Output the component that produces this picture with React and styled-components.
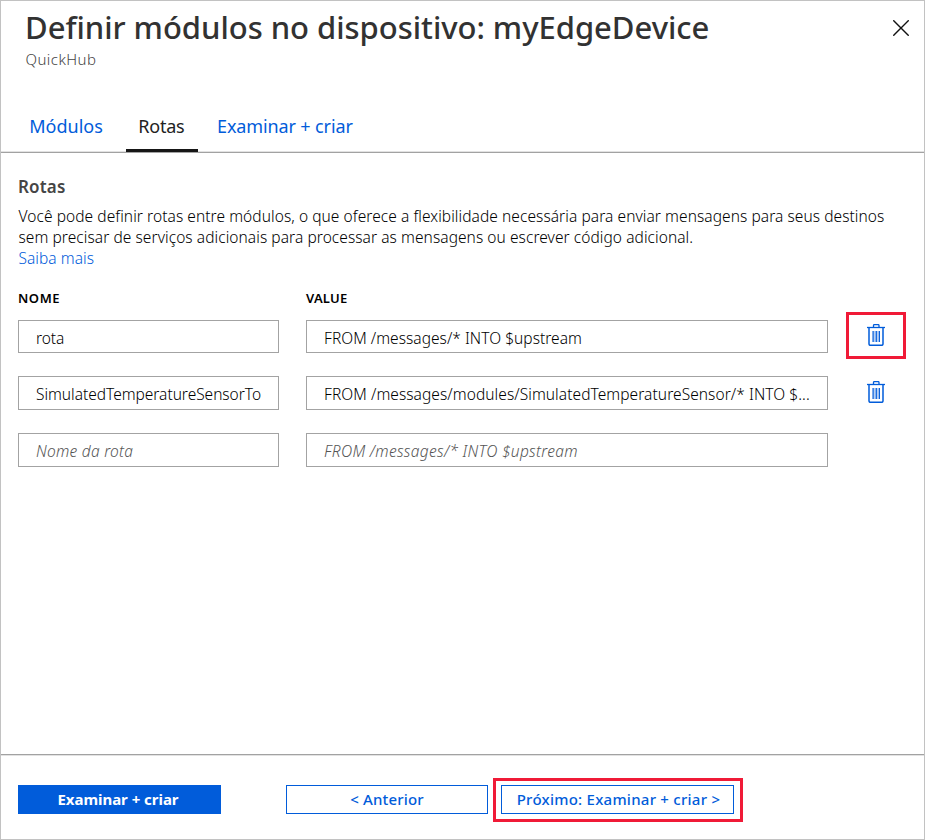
import React from "react";
import styled, { createGlobalStyle } from "styled-components";

const BLUE = "#015cda";
const RED = "#f01a37";

const GlobalStyle = createGlobalStyle`
  * { box-sizing: border-box; }
  body { margin: 0; background: #fff; }
  button, input { font: inherit; color: inherit; border-radius: 0; }
`;

const Panel = styled.main`
  width: 925px;
  height: 840px;
  display: flex;
  flex-direction: column;
  border: 1px solid #c2c2c2;
  background: #fff;
  color: #323130;
  font-family: "Noto Sans", "Open Sans", sans-serif;
`;

const Header = styled.header`
  display: flex;
  justify-content: space-between;
  height: 112px;
  padding: 5px 15px 0 24px;
`;

const Title = styled.h1`
  margin: 0;
  font-size: 31px;
  font-weight: 500;
  line-height: 42px;
  letter-spacing: -0.035px;
  color: #323232;
  white-space: nowrap;
`;

const Subtitle = styled.div`
  margin: 1px 0 0 0.5px;
  font-size: 15px;
  font-weight: 300;
  line-height: 20px;
  letter-spacing: 0.45px;
  color: #444;
`;

const CloseButton = styled.button`
  width: 16px;
  height: 16px;
  margin-top: 14px;
  padding: 0;
  border: 0;
  background: none;
  line-height: 0;
`;

const Tabs = styled.nav`
  display: flex;
  gap: 8px;
  height: 40px;
  padding-left: 16px;
  border-bottom: 1px solid #a2a2a2;
  box-shadow: inset 0 -1px #e2e2e2;
`;

const Tab = styled.a`
  width: ${(p) => p.$width}px;
  height: 39px;
  padding-left: ${(p) => p.$indent}px;
  font-size: 18px;
  line-height: 26px;
  font-weight: 400;
  letter-spacing: ${(p) => p.$tracking}px;
  white-space: nowrap;
  color: ${(p) => (p.$active ? "#222" : BLUE)};
  border-bottom: ${(p) => (p.$active ? "3px solid #161616" : "0")};
`;

const Content = styled.section`
  flex: 1;
  padding: 23px 18px 0 17px;
`;

const SectionTitle = styled.h2`
  margin: 0 0 8px;
  font-size: 17px;
  font-weight: 600;
  line-height: 22px;
  letter-spacing: 0.18px;
  color: #454545;
`;

const Description = styled.p`
  margin: 0;
  padding-left: 0.5px;
  font-size: 15.5px;
  font-weight: 300;
  line-height: 21px;
  letter-spacing: 0.069px;
  white-space: nowrap;
  color: #000;
`;

const LearnMore = styled.a`
  display: block;
  width: max-content;
  padding-left: 0.5px;
  font-size: 15.5px;
  font-weight: 300;
  line-height: 21px;
  letter-spacing: 0.05px;
  color: ${BLUE};
`;

const HeadRow = styled.div`
  display: grid;
  grid-template-columns: 261px 522px;
  column-gap: 27px;
  margin-top: 20px;
`;

const ColumnHead = styled.div`
  font-size: 13px;
  font-weight: 600;
  line-height: 18px;
  letter-spacing: ${(p) => p.$tracking}px;
  color: #000;
`;

const RouteTable = styled.div`
  display: flex;
  flex-direction: column;
  gap: 23px;
  margin-top: 13px;
`;

const RouteRow = styled.div`
  display: grid;
  grid-template-columns: 261px 522px 60px;
  grid-template-rows: ${(p) => p.$height}px;
  column-gap: 27px;
`;

const Field = styled.input`
  width: 100%;
  height: 100%;
  padding: ${(p) => p.$drop}px 12px 0 17px;
  border: 1px solid #a3a3a3;
  outline: 0;
  background: #fff;
  font-size: 15.5px;
  font-weight: 300;
  letter-spacing: ${(p) => p.$tracking}px;
  text-overflow: ellipsis;
  color: #000;
  &::placeholder {
    color: #555;
    font-style: italic;
    opacity: 1;
  }
`;

const DeleteButton = styled.button`
  display: flex;
  justify-content: center;
  align-items: center;
  width: 60px;
  height: 47px;
  margin: ${(p) => (p.$highlight ? -8 : -7)}px 0 0 -9px;
  padding: 0 0 1px;
  border: 3px solid ${(p) => (p.$highlight ? RED : "transparent")};
  background: none;
`;

const Footer = styled.footer`
  display: flex;
  align-items: center;
  height: 85px;
  padding: 4px 0 0 17px;
  border-top: 1px solid #a2a2a2;
  box-shadow: inset 0 1px #e2e2e2;
`;

const ActionButton = styled.button`
  width: ${(p) => p.$width}px;
  height: 29px;
  padding: 0 ${(p) => p.$padRight || 0}px 0 ${(p) => p.$padLeft || 0}px;
  border: 1px solid ${BLUE};
  background: ${(p) => (p.$primary ? BLUE : "#fff")};
  color: ${(p) => (p.$primary ? "#fff" : BLUE)};
  font-size: 15px;
  font-weight: ${(p) => (p.$primary ? 700 : 500)};
  line-height: 27px;
  letter-spacing: ${(p) => p.$tracking}px;
  white-space: nowrap;
`;

const PreviousSlot = styled.div`
  display: flex;
  margin-left: 65px;
`;

const NextHighlight = styled.div`
  display: flex;
  width: 250px;
  height: 44px;
  margin: 2px 0 0 5px;
  padding: 4px 0 0 5px;
  border: 3px solid ${RED};
`;

const CloseIcon = () => (
  <svg width="16" height="16" viewBox="0 0 16 16" fill="none" stroke="#111" strokeWidth="1.4">
    <path d="M0.3 0.3 15.7 15.7M15.7 0.3 0.3 15.7" />
  </svg>
);

const TrashIcon = () => (
  <svg width="18" height="22" viewBox="0 0 18 22" fill="none">
    <path d="M6.5 3V1.5Q6.5.6 7.4.6h3.7Q12 .6 12 1.5V3" stroke={BLUE} strokeWidth="1.3" />
    <path d="M0 3.5h18" stroke={BLUE} strokeWidth="1.3" />
    <path d="M2 4v16.1q0 1.2 1.2 1.2h11.6q1.2 0 1.2-1.2V4" stroke={BLUE} strokeWidth="1.5" />
    <path d="M5.5 7h7.5v11H5.5z" fill="#b5cff5" />
    <path d="M6.1 7v11M9.3 7v11M12.4 7v11" stroke={BLUE} strokeWidth="1.1" />
  </svg>
);

const routes = [
  {
    name: "rota",
    nameTracking: -0.1,
    value: "FROM /messages/* INTO $upstream",
    valueTracking: 0.04,
    height: 33,
    drop: 2,
    removable: true,
    highlight: true,
  },
  {
    name: "SimulatedTemperatureSensorTo",
    nameTracking: -0.02,
    value: "FROM /messages/modules/SimulatedTemperatureSensor/* INTO $...",
    valueTracking: 0.07,
    height: 34,
    drop: 2,
    removable: true,
  },
  { nameTracking: 0.26, valueTracking: 0.32, height: 34, drop: 1 },
];

export default function App() {
  return (
    <>
      <GlobalStyle />
      <Panel>
        <Header>
          <div>
            <Title>Definir módulos no dispositivo: myEdgeDevice</Title>
            <Subtitle>QuickHub</Subtitle>
          </div>
          <CloseButton aria-label="Fechar"><CloseIcon /></CloseButton>
        </Header>
        <Tabs>
          <Tab $width={101} $indent={12.3} $tracking={0}>Módulos</Tab>
          <Tab $width={72} $indent={12.3} $tracking={-0.25} $active>Rotas</Tab>
          <Tab $width={160} $indent={11} $tracking={-0.12}>Examinar + criar</Tab>
        </Tabs>
        <Content>
          <SectionTitle>Rotas</SectionTitle>
          <Description>
            Você pode definir rotas entre módulos, o que oferece a flexibilidade necessária para enviar mensagens para seus destinos
            <br />
            sem precisar de serviços adicionais para processar as mensagens ou escrever código adicional.
          </Description>
          <LearnMore>Saiba mais</LearnMore>
          <HeadRow>
            <ColumnHead $tracking={0.55}>NOME</ColumnHead>
            <ColumnHead $tracking={0.22}>VALUE</ColumnHead>
          </HeadRow>
          <RouteTable>
            {routes.map((r, i) => (
              <RouteRow key={i} $height={r.height}>
                <Field $drop={r.drop} $tracking={r.nameTracking} defaultValue={r.name} placeholder="Nome da rota" />
                <Field
                  $drop={r.drop}
                  $tracking={r.valueTracking}
                  defaultValue={r.value}
                  placeholder="FROM /messages/* INTO $upstream"
                />
                {r.removable && (
                  <DeleteButton $highlight={r.highlight} aria-label="Excluir">
                    <TrashIcon />
                  </DeleteButton>
                )}
              </RouteRow>
            ))}
          </RouteTable>
        </Content>
        <Footer>
          <ActionButton $primary $width={203} $padRight={3} $tracking={-0.03}>Examinar + criar</ActionButton>
          <PreviousSlot>
            <ActionButton $width={202} $tracking={0.15}>&lt; Anterior</ActionButton>
          </PreviousSlot>
          <NextHighlight>
            <ActionButton $width={233} $padLeft={2} $tracking={0.25}>Próximo: Examinar + criar &gt;</ActionButton>
          </NextHighlight>
        </Footer>
      </Panel>
    </>
  );
}
